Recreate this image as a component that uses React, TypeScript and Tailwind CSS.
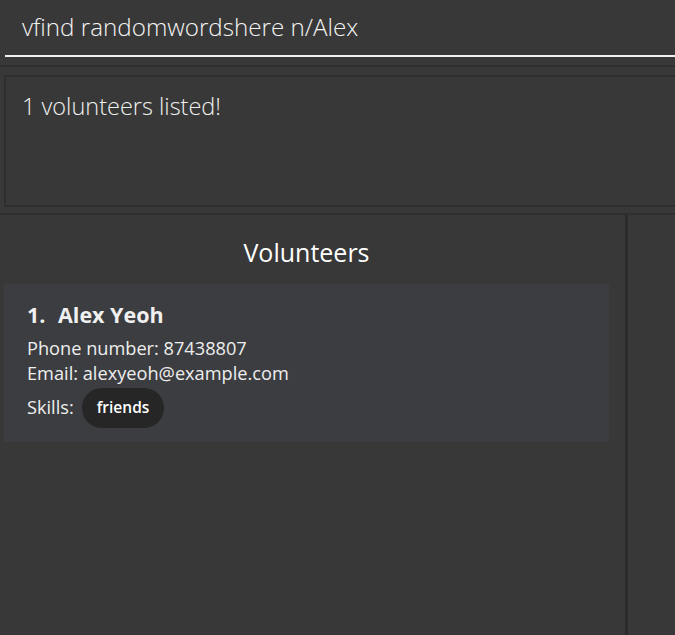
import React, { type FC } from "react";

const font = { fontFamily: '"Open Sans", "Noto Sans", sans-serif' };

const PersonCard: FC = () => (
  <div className="mx-[4px] mt-[16px] w-[605px] bg-[#3c3d40] px-[23px] pt-[17px] pb-[14px] text-[#eeeeee]">
    <div className="flex items-center text-[21.5px] font-bold leading-[28px] text-[#f0f0f0]">
      <span className="w-[31px]">1.</span>
      <span>Alex Yeoh</span>
    </div>
    <div className="mt-[7px] text-[18.2px] leading-[25px]">Phone number: 87438807</div>
    <div className="text-[18.2px] leading-[25px]">Email: alexyeoh@example.com</div>
    <div className="mt-[2px] flex items-center gap-[8px] text-[18.2px]">
      <span>Skills:</span>
      <span className="flex h-[40px] items-center rounded-full bg-[#262626] px-[15px] text-[15.5px] font-semibold text-white">
        friends
      </span>
    </div>
  </div>
);

const App: FC = () => {
  return (
    <div className="flex h-[635px] w-[675px] flex-col overflow-hidden bg-[#383838]" style={font}>
      {/* command box */}
      <div className="h-[57px] pl-[5px]">
        <div className="flex h-full items-center border-b-2 border-[#f2f2f2] pl-[17px] pb-[1px] text-[24.2px] font-light text-[#f4f4f4]">
          vfind randomwordshere n/Alex
        </div>
      </div>

      {/* result display */}
      <div className="mt-[8px] border-t-2 border-[#2f2f2f] pt-[8px] pb-[6px]">
        <div className="ml-[4px] h-[132px] border-y-2 border-l-2 border-[#2e2e2e] px-[16px] pt-[12px] text-[23.5px] font-light text-[#f0f0f0]">
          1 volunteers listed!
        </div>
      </div>

      {/* lists */}
      <div className="flex flex-1 border-t-2 border-[#2f2f2f]">
        <div className="w-[628px] border-r-[3px] border-[#2b2b2b]">
          <div className="pt-[21px] pr-[12px] text-center text-[25px] leading-[32px] text-white">Volunteers</div>
          <PersonCard />
        </div>
        <div className="flex-1" />
      </div>
    </div>
  );
};

export default App;
